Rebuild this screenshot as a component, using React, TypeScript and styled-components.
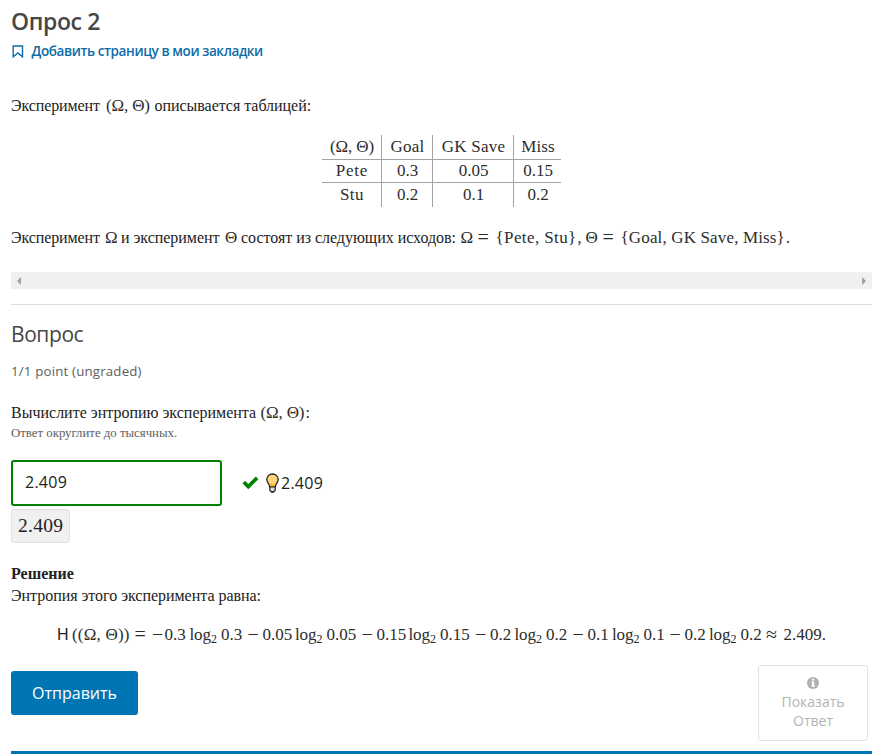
import React from "react";
import styled, { createGlobalStyle } from "styled-components";

const Global = createGlobalStyle`
  body { margin: 0; background: #fff; }
  * { box-sizing: border-box; }
`;

const sans = `"Open Sans", sans-serif`;
const serif = `"Liberation Serif", serif`;

const Page = styled.main`
  width: 861px;
  margin-left: 11px;
  height: 756px;
  display: flex;
  flex-direction: column;
  color: #222;
  font-family: ${serif};
  font-size: 16px;
  overflow: hidden;
`;

const Title = styled.h1`
  margin: 6px 0 0;
  height: 30px;
  font: 600 23px/30px ${sans};
  letter-spacing: -0.37px;
  color: #474747;
`;

const Bookmark = styled.a`
  display: flex;
  align-items: center;
  height: 20px;
  margin-top: 5px;
  gap: 7.5px;
  padding-left: 1px;
  color: #0b6ca8;
  font: 600 13.5px/20px ${sans};
  letter-spacing: -0.4px;
  white-space: nowrap;
`;

const Line = styled.p<{ $top: number; $indent?: number }>`
  display: flex;
  align-items: baseline;
  margin: ${(p) => p.$top}px 0 0;
  padding-left: ${(p) => p.$indent ?? 0}px;
  height: 22px;
  line-height: 22px;
  white-space: pre;
  flex: none;
`;

const Word = styled.span<{ $w?: number; $ls?: number }>`
  flex: none;
  width: ${(p) => (p.$w ? `${p.$w}px` : "auto")};
  letter-spacing: ${(p) => p.$ls ?? -0.03}px;
`;

const Term = styled(Word)`
  font-size: 17px;
  color: #2d2d2d;
`;

const Operator = styled(Word)`
  font-size: 20px;
  line-height: 20px;
  color: #2d2d2d;
  transform: translateY(1px);
`;

const Sub = styled(Word)`
  font-size: 12px;
  transform: translateY(3px);
`;

const Roman = styled(Word)`
  font-family: "Liberation Sans", sans-serif;
  font-size: 16px;
`;

const Matrix = styled.div`
  display: grid;
  grid-template-columns: 60px 51px 81px 47px;
  grid-template-rows: 25px 23px 24px;
  width: 239px;
  margin: 18px 0 0 311px;
  flex: none;
`;

const Cell = styled.div<{ $right: boolean; $bottom: boolean; $ls: number }>`
  display: flex;
  align-items: center;
  justify-content: center;
  padding-left: 1px;
  border-right: ${(p) => (p.$right ? "1px solid #a3a3a3" : "0")};
  border-bottom: ${(p) => (p.$bottom ? "1px solid #a3a3a3" : "0")};
  font-size: 17px;
  line-height: 22px;
  letter-spacing: ${(p) => p.$ls}px;
  color: #2d2d2d;
  white-space: pre;
`;

const Scrollbar = styled.div`
  display: flex;
  justify-content: space-between;
  align-items: center;
  height: 17px;
  margin-top: 24px;
  padding: 0 6px;
  background: #f0f0f0;
  flex: none;
`;

const Rule = styled.hr`
  width: 100%;
  height: 1px;
  margin: 15px 0 0;
  border: 0;
  background: #ddd;
  flex: none;
`;

const Heading = styled.h3`
  margin: 16px 0 0;
  height: 26px;
  font: 400 21px/26px ${sans};
  letter-spacing: -0.42px;
  color: #474747;
`;

const Points = styled.div`
  margin-top: 14px;
  height: 20px;
  font: 400 13.3px/20px ${sans};
  letter-spacing: 0.17px;
  color: #5e5e5e;
`;

const Hint = styled.small`
  margin-top: 1px;
  height: 16px;
  font-size: 12.8px;
  line-height: 16px;
  color: #5e5e5e;
`;

const AnswerRow = styled.div`
  display: flex;
  align-items: center;
  margin-top: 19px;
  height: 46px;
  font: 400 16px/22px ${sans};
  letter-spacing: 0.25px;
  color: #222;
  flex: none;
`;

const Input = styled.div`
  width: 211px;
  height: 46px;
  margin-right: 20px;
  padding: 9px 12px;
  border: 2px solid #008100;
  border-radius: 3px;
`;

const Check = styled.svg`
  margin-right: 6px;
`;

const Bulb = styled.svg`
  margin-right: 1px;
`;

const Preview = styled.div`
  width: 59px;
  height: 34px;
  margin-top: 3px;
  padding-left: 6px;
  border: 1px solid #e2e2e2;
  border-radius: 3px;
  background: #f0f0f0;
  font-size: 19.5px;
  line-height: 31px;
  letter-spacing: 0.3px;
  flex: none;
`;

const Solution = styled.strong`
  margin-top: 20px;
  height: 22px;
  line-height: 22px;
`;

const Actions = styled.div`
  display: flex;
  justify-content: space-between;
  align-items: flex-start;
  height: 76px;
  margin-top: 20px;
  padding-right: 4px;
  flex: none;
`;

const Submit = styled.button`
  width: 127px;
  height: 44px;
  margin-top: 6px;
  padding: 0;
  border: 0;
  border-radius: 3px;
  background: #0075b4;
  color: #fff;
  font: 400 16px/22px ${sans};
`;

const Show = styled.button`
  display: flex;
  flex-direction: column;
  align-items: center;
  width: 110px;
  height: 76px;
  padding: 11px 0 0;
  border: 1px solid #e3e3e3;
  border-radius: 3px;
  background: #fff;
  color: #b4b4b4;
  font: 400 14px/19px ${sans};
`;

const InfoIcon = styled.svg`
  margin-bottom: 3px;
`;

const Footer = styled.div`
  height: 3px;
  margin-top: 10px;
  background: #0075b4;
  flex: none;
`;

const rows: [string, number][][] = [
  [["(Ω, Θ)", -0.15], ["Goal", 0.2], ["GK Save", 0.25], ["Miss", 0.1]],
  [["Pete", 0.75], ["0.3", 0], ["0.05", 0], ["0.15", 0]],
  [["Stu", 0.5], ["0.2", 0], ["0.1", 0], ["0.2", 0]],
];

const terms = [
  { value: "0.3", before: 25, after: 26.5 },
  { value: "0.05", before: 32.5, after: 35 },
  { value: "0.15", before: 32, after: 35 },
  { value: "0.2", before: 24.5, after: 26.5 },
  { value: "0.1", before: 24.5, after: 26 },
  { value: "0.2", before: 24.5, after: 25.5 },
];

export default function App() {
  return (
    <>
      <Global />
      <Page>
        <Title>Опрос 2</Title>
        <Bookmark>
          <svg width="12" height="13" viewBox="0 0 12 13" fill="none" stroke="currentColor" strokeWidth="1.4">
            <path d="M1.2 1h9.3v10.8L5.85 8 1.2 11.8z" />
          </svg>
          Добавить страницу в мои закладки
        </Bookmark>

        <Line $top={34}>
          <Word $w={95} $ls={-0.1}>Эксперимент</Word>
          <Term $w={48.5} $ls={-0.15}>(Ω, Θ)</Term>
          <Word $ls={-0.04}>описывается таблицей:</Word>
        </Line>

        <Matrix>
          {rows.map((row, r) =>
            row.map(([text, ls], c) => (
              <Cell key={`${r}-${c}`} $right={c < 3} $bottom={r < 2} $ls={ls}>
                {text}
              </Cell>
            ))
          )}
        </Matrix>

        <Line $top={19}>
          <Word $w={94} $ls={-0.1}>Эксперимент</Word>
          <Term $w={16}>Ω</Term>
          <Word $w={104}>и эксперимент</Word>
          <Term $w={16}>Θ</Term>
          <Word $w={219.5}>состоят из следующих исходов:</Word>
          <Term $w={17}>Ω</Term>
          <Operator $w={18}>=</Operator>
          <Term $w={82} $ls={0.4}>{"{Pete, Stu}"}</Term>
          <Word $w={8}>,</Word>
          <Term $w={17}>Θ</Term>
          <Operator $w={18}>=</Operator>
          <Term $w={165.5} $ls={0.15}>{"{Goal, GK Save, Miss}"}</Term>
          <Word>.</Word>
        </Line>

        <Scrollbar>
          <svg width="4" height="8" viewBox="0 0 4 8" fill="#a0a0a0"><path d="M4 0v8L0 4z" /></svg>
          <svg width="4" height="8" viewBox="0 0 4 8" fill="#a0a0a0"><path d="M0 0v8l4-4z" /></svg>
        </Scrollbar>
        <Rule />

        <Heading>Вопрос</Heading>
        <Points>1/1 point (ungraded)</Points>

        <Line $top={21}>
          <Word $w={249.5} $ls={0}>Вычислите энтропию эксперимента</Word>
          <Term $w={45} $ls={-0.15}>(Ω, Θ)</Term>
          <Word>:</Word>
        </Line>
        <Hint>Ответ округлите до тысячных.</Hint>

        <AnswerRow>
          <Input>2.409</Input>
          <Check width="17" height="14" viewBox="0 0 17 14" fill="#008100">
            <path d="M0.5 7.4 3.1 4.8 6.3 8 13.8 0.6 16.4 3.2 6.3 13.2z" />
          </Check>
          <Bulb width="15" height="20" viewBox="0 0 15 20">
            <path d="M7.5 1a5.6 5.6 0 0 0-5.7 5.6c0 3.2 2.7 3.7 2.9 7.4h5.6c.2-3.7 2.9-4.2 2.9-7.4A5.6 5.6 0 0 0 7.5 1z" fill="#ffd67a" stroke="#222" strokeWidth="1.3" />
            <path d="M5.5 10l2 1.2 2-1.2v3.4h-4z" fill="#fbb917" />
            <path d="M4.8 14h5.4v3.2l-1.5 1.6H6.3l-1.5-1.6z" fill="#ddd" stroke="#222" strokeWidth="1.2" />
            <path d="M6 18.8h3" stroke="#222" strokeWidth="1.3" />
          </Bulb>
          2.409
        </AnswerRow>
        <Preview>2.409</Preview>

        <Solution>Решение</Solution>
        <Line $top={0}>
          <Word>Энтропия этого эксперимента равна:</Word>
        </Line>

        <Line $top={16} $indent={46}>
          <Roman $w={15}>H</Roman>
          <Term $w={62.5} $ls={0.2}>((Ω, Θ))</Term>
          <Operator $w={17.5}>=</Operator>
          {terms.map((t, i) => (
            <React.Fragment key={i}>
              <Operator $w={i === 0 ? 12.5 : 15}>−</Operator>
              <Term $w={t.before}>{t.value}</Term>
              <Term $w={21.5} $ls={-0.1}>log</Term>
              <Sub $w={10}>2</Sub>
              <Term $w={t.after}>{t.value}</Term>
            </React.Fragment>
          ))}
          <Operator $w={17.5}>≈</Operator>
          <Term $ls={0}>2.409.</Term>
        </Line>

        <Actions>
          <Submit>Отправить</Submit>
          <Show>
            <InfoIcon width="12" height="12" viewBox="0 0 12 12">
              <circle cx="6" cy="6" r="6" fill="#b0b0b0" />
              <path d="M5 1.8h2.2v1.8H5zM4.3 4.6h2.9v3.9h.8v1.3H4.3V8.5h.8V5.9h-.8z" fill="#fff" />
            </InfoIcon>
            <span>Показать</span>
            <span>Ответ</span>
          </Show>
        </Actions>
        <Footer />
      </Page>
    </>
  );
}
